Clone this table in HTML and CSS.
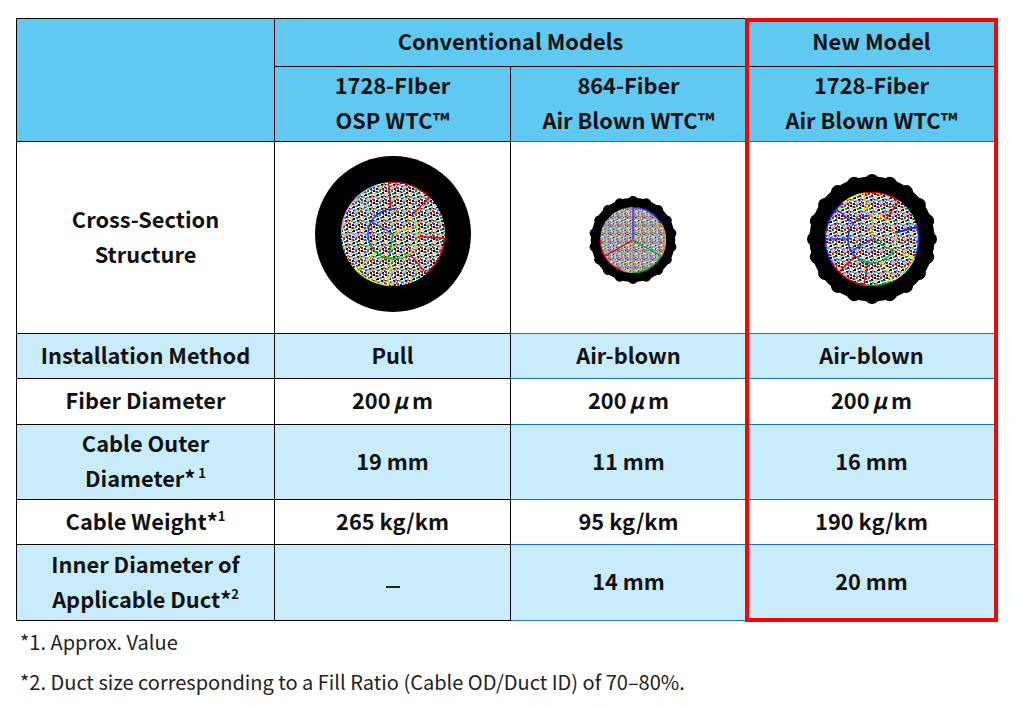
FILE: index.html
```html
<!DOCTYPE html>
<html lang="en">
<head>
<meta charset="utf-8">
<title>Cable comparison</title>
<link rel="stylesheet" href="styles.css">
</head>
<body>
<main class="page">
  <div class="frame">
    <table class="spec">
      <colgroup>
        <col class="w1"><col class="w2"><col class="w3"><col class="w4">
      </colgroup>
      <tr class="r-h1">
        <th class="hd" rowspan="2"></th>
        <th class="hd" colspan="2">Conventional Models</th>
        <th class="hd">New Model</th>
      </tr>
      <tr class="r-h2">
        <th class="hd">1728-FIber<br>OSP WTC™</th>
        <th class="hd b">864-Fiber<br>Air Blown WTC™</th>
        <th class="hd b">1728-Fiber<br>Air Blown WTC™</th>
      </tr>
      <tr class="r-img">
        <td>Cross-Section<br>Structure</td>
        <td>
          <svg class="cable c1" width="160" height="160" viewBox="0 0 160 160">
            <defs>
              <pattern id="fib" width="12" height="12" patternUnits="userSpaceOnUse">
                <rect width="12" height="12" fill="#fff"/>
                <rect x="0" y="0" width="2" height="2" fill="#000"/>
                <rect x="3" y="1" width="2" height="2" fill="#e00"/>
                <rect x="6" y="0" width="2" height="2" fill="#555"/>
                <rect x="9" y="2" width="2" height="2" fill="#00f"/>
                <rect x="1" y="3" width="2" height="2" fill="#fc0"/>
                <rect x="4" y="4" width="2" height="2" fill="#000"/>
                <rect x="7" y="3" width="2" height="2" fill="#0a0"/>
                <rect x="10" y="5" width="2" height="2" fill="#888"/>
                <rect x="2" y="6" width="2" height="2" fill="#0cf"/>
                <rect x="5" y="7" width="2" height="2" fill="#c6f"/>
                <rect x="8" y="6" width="2" height="2" fill="#000"/>
                <rect x="11" y="8" width="1" height="2" fill="#e00"/>
                <rect x="0" y="9" width="2" height="2" fill="#444"/>
                <rect x="3" y="10" width="2" height="2" fill="#00f"/>
                <rect x="6" y="9" width="2" height="2" fill="#fc0"/>
                <rect x="9" y="10" width="2" height="2" fill="#000"/>
                <rect x="1" y="11" width="1.5" height="1" fill="#999"/>
                <rect x="4" y="8" width="1.5" height="1.5" fill="#222"/>
                <rect x="7" y="11" width="1.5" height="1" fill="#666"/>
                <rect x="10" y="0" width="1.5" height="1.5" fill="#333"/>
                <rect x="11" y="3" width="1" height="1.5" fill="#f80"/>
                <rect x="2" y="1" width="1" height="1.5" fill="#777"/>
                <rect x="8" y="9" width="1.5" height="1.5" fill="#c6f"/>
                <rect x="5" y="2" width="1.5" height="1.5" fill="#0cf"/>
                <rect x="0" y="6" width="1.5" height="1.5" fill="#000"/>
                <rect x="7" y="7" width="1.5" height="1.5" fill="#aaa"/>
                <rect x="5" y="11" width="1.5" height="1" fill="#0a0"/>
                <rect x="9" y="7" width="1.5" height="1.5" fill="#333"/>
                <rect x="3" y="5" width="1" height="1" fill="#111"/>
                <rect x="10" y="11" width="1" height="1" fill="#e00"/>
              </pattern>
              <pattern id="fib2" href="#fib" patternTransform="scale(0.7)"/>
            </defs>
            <circle cx="80" cy="80" r="78" fill="#000"/>
            <circle cx="80" cy="80" r="52" fill="url(#fib)"/>
            <g stroke-width="1.3" fill="none">
              <circle cx="80" cy="80" r="51.5" stroke="#d00" stroke-dasharray="45 300" transform="rotate(-95 80 80)"/>
              <circle cx="80" cy="80" r="51.5" stroke="#d00" stroke-dasharray="40 300" transform="rotate(5 80 80)"/>
              <circle cx="80" cy="80" r="51.5" stroke="#ee0" stroke-dasharray="40 300" transform="rotate(95 80 80)"/>
              <circle cx="80" cy="80" r="51.5" stroke="#c9f" stroke-dasharray="40 300" transform="rotate(180 80 80)"/>
              <circle cx="80" cy="80" r="51.5" stroke="#5cf" stroke-dasharray="25 300" transform="rotate(225 80 80)"/>
              <circle cx="80" cy="80" r="25" stroke="#22f" stroke-dasharray="55 300" transform="rotate(150 80 80)"/>
              <circle cx="80" cy="80" r="25" stroke="#0a0" stroke-dasharray="50 300" transform="rotate(50 80 80)"/>
              <circle cx="80" cy="80" r="25" stroke="#ec0" stroke-dasharray="50 300" transform="rotate(-40 80 80)"/>
              <line x1="77.7" y1="54.1" x2="75.5" y2="28.2" stroke="#d00"/>
              <line x1="98.4" y1="61.6" x2="116.8" y2="43.2" stroke="#d00"/>
              <line x1="105.9" y1="82.3" x2="131.8" y2="84.5" stroke="#d00"/>
              <line x1="96.7" y1="99.9" x2="113.4" y2="119.8" stroke="#d00"/>
              <line x1="77.7" y1="105.9" x2="75.5" y2="131.8" stroke="#ee0"/>
              <line x1="61.6" y1="98.4" x2="43.2" y2="116.8" stroke="#ee0"/>
              <line x1="54" y1="80" x2="28" y2="80" stroke="#c9f"/>
              <line x1="61.6" y1="61.6" x2="43.2" y2="43.2" stroke="#5cf"/>
              <line x1="80" y1="80" x2="58.3" y2="67.5" stroke="#22f"/>
              <line x1="80" y1="80" x2="103.5" y2="71.4" stroke="#ec0"/>
              <line x1="80" y1="80" x2="75.7" y2="104.6" stroke="#0a0"/>
            </g>
          </svg>
        </td>
        <td class="b">
          <svg class="cable c2" width="96" height="96" viewBox="0 0 96 96">
            <circle cx="48" cy="48" r="42.3" fill="#000"/>
            <g fill="#000">
              <circle id="bumpA" cx="48" cy="9" r="5"/>
              <use href="#bumpA" transform="rotate(20 48 48)"/>
              <use href="#bumpA" transform="rotate(40 48 48)"/>
              <use href="#bumpA" transform="rotate(60 48 48)"/>
              <use href="#bumpA" transform="rotate(80 48 48)"/>
              <use href="#bumpA" transform="rotate(100 48 48)"/>
              <use href="#bumpA" transform="rotate(120 48 48)"/>
              <use href="#bumpA" transform="rotate(140 48 48)"/>
              <use href="#bumpA" transform="rotate(160 48 48)"/>
              <use href="#bumpA" transform="rotate(180 48 48)"/>
              <use href="#bumpA" transform="rotate(200 48 48)"/>
              <use href="#bumpA" transform="rotate(220 48 48)"/>
              <use href="#bumpA" transform="rotate(240 48 48)"/>
              <use href="#bumpA" transform="rotate(260 48 48)"/>
              <use href="#bumpA" transform="rotate(280 48 48)"/>
              <use href="#bumpA" transform="rotate(300 48 48)"/>
              <use href="#bumpA" transform="rotate(320 48 48)"/>
              <use href="#bumpA" transform="rotate(340 48 48)"/>
            </g>
            <circle cx="48" cy="48" r="33" fill="url(#fib2)"/>
            <g stroke-width="1.2" fill="none">
              <circle cx="48" cy="48" r="32.6" stroke="#22f" stroke-dasharray="34.6 300" transform="rotate(-90 48 48)"/>
              <circle cx="48" cy="48" r="32.6" stroke="#f90" stroke-dasharray="34.6 300" transform="rotate(-30 48 48)"/>
              <circle cx="48" cy="48" r="32.6" stroke="#0a0" stroke-dasharray="34.6 300" transform="rotate(30 48 48)"/>
              <circle cx="48" cy="48" r="32.6" stroke="#d00" stroke-dasharray="40 300" transform="rotate(110 48 48)"/>
              <line x1="48" y1="48" x2="48" y2="15" stroke="#22f"/>
              <line x1="48" y1="48" x2="76.6" y2="64.5" stroke="#0a0"/>
              <line x1="48" y1="48" x2="19.4" y2="64.5" stroke="#d00"/>
              <line x1="48" y1="48" x2="76.6" y2="31.5" stroke="#f90" stroke-width="0.8"/>
              <line x1="48" y1="48" x2="48" y2="81" stroke="#888" stroke-width="0.8"/>
              <line x1="48" y1="48" x2="19.4" y2="31.5" stroke="#888" stroke-width="0.8"/>
            </g>
          </svg>
        </td>
        <td class="b">
          <svg class="cable c3" width="140" height="140" viewBox="0 0 140 140">
            <circle cx="70" cy="70" r="62.5" fill="#000"/>
            <g fill="#000">
              <circle id="bumpB" cx="70" cy="12" r="7"/>
              <use href="#bumpB" transform="rotate(18 70 70)"/>
              <use href="#bumpB" transform="rotate(36 70 70)"/>
              <use href="#bumpB" transform="rotate(54 70 70)"/>
              <use href="#bumpB" transform="rotate(72 70 70)"/>
              <use href="#bumpB" transform="rotate(90 70 70)"/>
              <use href="#bumpB" transform="rotate(108 70 70)"/>
              <use href="#bumpB" transform="rotate(126 70 70)"/>
              <use href="#bumpB" transform="rotate(144 70 70)"/>
              <use href="#bumpB" transform="rotate(162 70 70)"/>
              <use href="#bumpB" transform="rotate(180 70 70)"/>
              <use href="#bumpB" transform="rotate(198 70 70)"/>
              <use href="#bumpB" transform="rotate(216 70 70)"/>
              <use href="#bumpB" transform="rotate(234 70 70)"/>
              <use href="#bumpB" transform="rotate(252 70 70)"/>
              <use href="#bumpB" transform="rotate(270 70 70)"/>
              <use href="#bumpB" transform="rotate(288 70 70)"/>
              <use href="#bumpB" transform="rotate(306 70 70)"/>
              <use href="#bumpB" transform="rotate(324 70 70)"/>
              <use href="#bumpB" transform="rotate(342 70 70)"/>
            </g>
            <circle cx="70" cy="70" r="47" fill="url(#fib)"/>
            <g stroke-width="1.3" fill="none">
              <circle cx="70" cy="70" r="46.5" stroke="#ee0" stroke-dasharray="35 400" transform="rotate(-140 70 70)"/>
              <circle cx="70" cy="70" r="46.5" stroke="#d00" stroke-dasharray="35 400" transform="rotate(-100 70 70)"/>
              <circle cx="70" cy="70" r="46.5" stroke="#22f" stroke-dasharray="60 400" transform="rotate(-15 70 70)"/>
              <circle cx="70" cy="70" r="46.5" stroke="#ee0" stroke-dasharray="30 400" transform="rotate(25 70 70)"/>
              <circle cx="70" cy="70" r="46.5" stroke="#0a0" stroke-dasharray="30 400" transform="rotate(65 70 70)"/>
              <circle cx="70" cy="70" r="46.5" stroke="#d00" stroke-dasharray="40 400" transform="rotate(100 70 70)"/>
              <circle cx="70" cy="70" r="46.5" stroke="#22f" stroke-dasharray="70 400" transform="rotate(145 70 70)"/>
              <circle cx="70" cy="70" r="24" stroke="#22f" stroke-dasharray="60 200" transform="rotate(120 70 70)"/>
              <circle cx="70" cy="70" r="24" stroke="#0a0" stroke-dasharray="45 200" transform="rotate(20 70 70)"/>
              <circle cx="70" cy="70" r="24" stroke="#ee0" stroke-dasharray="45 200" transform="rotate(-90 70 70)"/>
              <line x1="65.8" y1="46.4" x2="61.8" y2="23.7" stroke="#ec0"/>
              <line x1="83.8" y1="50.3" x2="97" y2="31.5" stroke="#d00"/>
              <line x1="93.2" y1="63.8" x2="115.4" y2="57.8" stroke="#22f" stroke-width="2"/>
              <line x1="91.7" y1="80.1" x2="112.6" y2="89.9" stroke="#ee0"/>
              <line x1="80.1" y1="91.7" x2="89.9" y2="112.6" stroke="#ee0"/>
              <line x1="65.8" y1="93.6" x2="61.8" y2="116.3" stroke="#d00"/>
              <line x1="53" y1="87" x2="36.8" y2="103.2" stroke="#d00"/>
              <line x1="46" y1="70" x2="23" y2="70" stroke="#22f"/>
              <line x1="51.6" y1="54.6" x2="34" y2="39.8" stroke="#22f"/>
              <line x1="70" y1="70" x2="70" y2="46" stroke="#ec0"/>
              <line x1="70" y1="70" x2="90.8" y2="82" stroke="#0a0"/>
              <line x1="70" y1="70" x2="49.2" y2="82" stroke="#22f"/>
            </g>
          </svg>
        </td>
      </tr>
      <tr class="r-s light">
        <td>Installation Method</td>
        <td>Pull</td>
        <td class="b">Air-blown</td>
        <td class="b">Air-blown</td>
      </tr>
      <tr class="r-s2">
        <td>Fiber Diameter</td>
        <td>200<span class="mu">μ</span>m</td>
        <td class="b">200<span class="mu">μ</span>m</td>
        <td class="b">200<span class="mu">μ</span>m</td>
      </tr>
      <tr class="r-d light">
        <td>Cable Outer<br>Diameter*<sup>&nbsp;1</sup></td>
        <td>19 mm</td>
        <td class="b">11 mm</td>
        <td class="b">16 mm</td>
      </tr>
      <tr class="r-s">
        <td>Cable Weight*<sup>1</sup></td>
        <td>265 kg/km</td>
        <td class="b">95 kg/km</td>
        <td class="b">190 kg/km</td>
      </tr>
      <tr class="r-d2 light">
        <td>Inner Diameter of<br>Applicable Duct*<sup>2</sup></td>
        <td><span class="dash"></span></td>
        <td class="b">14 mm</td>
        <td class="b">20 mm</td>
      </tr>
    </table>
    <div class="highlight"></div>
  </div>
  <div class="notes">
    <p>*1. Approx. Value</p>
    <p>*2. Duct size corresponding to a Fill Ratio (Cable OD/Duct ID) of 70–80%.</p>
  </div>
</main>
</body>
</html>
```

FILE: styles.css
```css
html, body {
  margin: 0;
  padding: 0;
  background: #ffffff;
}

body {
  font-family: "Noto Sans CJK JP", "Noto Sans", sans-serif;
  color: #111111;
}

.page {
  padding: 18px 0 0 16px;
}

.frame {
  position: relative;
  width: 982px;
}

.spec {
  border-collapse: collapse;
  table-layout: fixed;
  width: 980px;
}

.w1 { width: 258px; }
.w2 { width: 236px; }
.w3 { width: 236px; }
.w4 { width: 250px; }

.spec th,
.spec td {
  border: 1px solid #000000;
  padding: 0 0 4px;
  text-align: center;
  vertical-align: middle;
  font-family: "Noto Sans CJK JP", "Noto Sans", sans-serif;
  font-size: 21.8px;
  font-weight: 700;
  line-height: 35px;
  color: #111111;
}

.spec .b {
  border-top-color: #1a6fc0;
  border-bottom-color: #1a6fc0;
}

.hd {
  background: #5fc9f1;
}

.light td {
  background: #c9ecfb;
}

.r-h1 { height: 48px; }
.r-h2 { height: 75px; }
.r-img { height: 192px; }
.r-s { height: 45px; }
.r-s2 { height: 46px; }
.r-d { height: 75px; }
.r-d2 { height: 76px; }

.cable {
  display: block;
  margin: 0 auto;
}

.c1 { margin-top: -4px; }
.c2 { margin-left: 74px; margin-top: 8px; }
.c3 { margin-top: 6px; }

.mu {
  display: inline-block;
  padding: 0 4px 0 3px;
  font-style: italic;
}

sup {
  font-size: 13px;
  line-height: 0;
  vertical-align: 9px;
  font-weight: 700;
}

.dash {
  display: inline-block;
  width: 14px;
  height: 2px;
  background: #222222;
  vertical-align: middle;
  margin-top: 6px;
}

.highlight {
  position: absolute;
  left: 729px;
  top: 0;
  width: 253px;
  height: 604px;
  border: 4px solid #ff0000;
  box-sizing: border-box;
  pointer-events: none;
}

.notes {
  padding: 1px 0 0 4px;
  font-family: "Noto Sans CJK JP", "Noto Sans", sans-serif;
  font-size: 20px;
  font-weight: 400;
  color: #222222;
}

.notes p {
  margin: 0;
  line-height: 40px;
}
```
